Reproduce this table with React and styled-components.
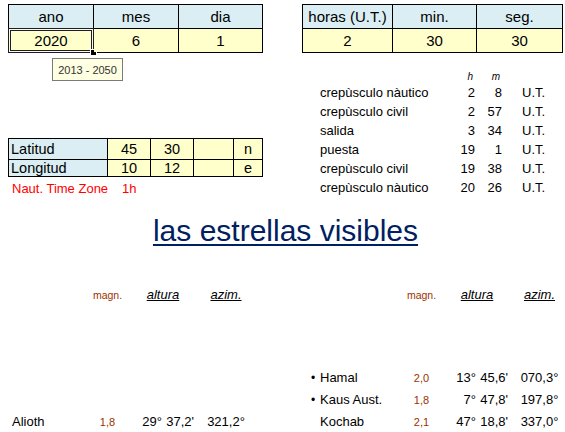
import React from 'react'
import styled, { createGlobalStyle } from 'styled-components'

const GlobalStyle = createGlobalStyle`
  html, body { margin: 0; padding: 0; background: #fff; }
  body {
    font-family: "Liberation Sans", Arial, sans-serif;
    color: #000;
    overflow: hidden;
  }
`

const HEAD_BG = '#daeef3'
const DATA_BG = '#ffffcc'
const BROWN = '#993300'

const Page = styled.div`
  width: 565px;
  height: 432px;
  box-sizing: border-box;
  padding: 4px 2px 0 8px;
  display: flex;
  flex-direction: column;
`

const TopRow = styled.div`
  display: flex;
  justify-content: space-between;
`

const SheetWrap = styled.div`
  position: relative;
`

const Sheet = styled.table`
  border-collapse: collapse;
  table-layout: fixed;
  width: ${p => p.$width}px;
  font-size: ${p => p.$size || 15}px;
`

const Row = styled.tr`
  height: ${p => p.$h || 24}px;
`

const Cell = styled.td`
  border: 1px solid #000;
  padding: 0 ${p => p.$pad || 0}px;
  text-align: ${p => p.$align || 'center'};
  background: ${p => (p.$head ? HEAD_BG : DATA_BG)};
  line-height: 1;
  position: relative;
`

const Selection = styled.div`
  position: absolute;
  inset: -1px;
  border: 3px double #1b1b38;
  pointer-events: none;
`

const Handle = styled.div`
  position: absolute;
  right: -4px;
  bottom: -4px;
  width: 5px;
  height: 5px;
  background: #000;
  border: 1px solid #fff;
`

const Tooltip = styled.div`
  position: absolute;
  left: 44px;
  top: 54px;
  width: 71px;
  height: 23px;
  box-sizing: border-box;
  border: 1px solid #7a7a7a;
  background: #ffffe1;
  font-size: 11px;
  color: #333;
  display: flex;
  align-items: center;
  justify-content: center;
`

const Middle = styled.div`
  display: grid;
  grid-template-columns: 312px 1fr;
  height: 144px;
`

const LatBlock = styled.div`
  margin-top: 85px;
`

const NautLine = styled.div`
  display: flex;
  color: #ff0000;
  font-size: 13px;
  height: 14px;
  line-height: 14px;
  margin-top: 5px;
  padding-left: 4px;
`

const NautLabel = styled.span`
  width: 110px;
`

const Twilight = styled.div`
  margin-top: 17px;
  font-size: 13px;
`

const TwiRow = styled.div`
  display: grid;
  grid-template-columns: 135px 20px 27px 1fr;
  height: ${p => (p.$head ? 13 : 19)}px;
  line-height: ${p => (p.$head ? 13 : 19)}px;
  font-size: ${p => (p.$head ? 10 : 13)}px;
  font-style: ${p => (p.$head ? 'italic' : 'normal')};
`

const Num = styled.span`
  text-align: right;
  padding-right: ${p => p.$pr || 0}px;
`

const Unit = styled.span`
  padding-left: 20px;
`

const Title = styled.h1`
  margin: 16px 0 0;
  height: 36px;
  line-height: 36px;
  text-align: center;
  font-weight: normal;
  font-size: 30px;
  color: #002060;
  text-decoration: underline;
  text-decoration-thickness: 2px;
  text-underline-offset: 3px;
`

const StarRow = styled.div`
  display: grid;
  grid-template-columns: 77px 45px 66px 60px 52px 12px 79px 45px 66px 53px;
  height: 22px;
  line-height: 22px;
  font-size: 13px;
  margin-top: ${p => p.$gap || 0}px;
`

const Name = styled.span`
  padding-left: ${p => p.$pl || 0}px;
  white-space: nowrap;
`

const Magn = styled.span`
  text-align: center;
  color: ${BROWN};
  font-size: ${p => (p.$head ? 10.5 : 11)}px;
`

const ColHead = styled.span`
  text-align: center;
  font-style: italic;
  text-decoration: underline;
  padding-left: ${p => p.$pl || 0}px;
`

const Altura = styled.span`
  display: grid;
  grid-template-columns: 32px 32px;
  white-space: nowrap;
  & > span { text-align: right; }
`

const Azim = styled.span`
  text-align: center;
  padding-left: ${p => p.$pl || 0}px;
`

const Bullet = styled.span`
  padding-left: 3px;
  font-size: 12px;
`

const twilight = [
  ['crepùsculo nàutico', 2, 8],
  ['crepùsculo civil', 2, 57],
  ['salida', 3, 34],
  ['puesta', 19, 1],
  ['crepùsculo civil', 19, 38],
  ['crepùsculo nàutico', 20, 26],
]

const right = [
  { bullet: true, name: 'Hamal', magn: '2,0', deg: '13°', min: "45,6'", az: '070,3°' },
  { bullet: true, name: 'Kaus Aust.', magn: '1,8', deg: '7°', min: "47,8'", az: '197,8°' },
  { bullet: false, name: 'Kochab', magn: '2,1', deg: '47°', min: "18,8'", az: '337,0°' },
]

const left = [null, null, { name: 'Alioth', magn: '1,8', deg: '29°', min: "37,2'", az: '321,2°' }]

function StarCells({ star, side }) {
  if (!star) {
    return side === 'left' ? (
      <>
        <span /><span /><span /><span />
      </>
    ) : (
      <>
        <span /><span /><span /><span /><span />
      </>
    )
  }
  return (
    <>
      {side === 'right' && <Bullet>{star.bullet ? '•' : ''}</Bullet>}
      <Name $pl={side === 'left' ? 4 : 0}>{star.name}</Name>
      <Magn>{star.magn}</Magn>
      <Altura>
        <span>{star.deg}</span>
        <span>{star.min}</span>
      </Altura>
      <Azim $pl={side === 'right' ? 6 : 0}>{star.az}</Azim>
    </>
  )
}

export default function App() {
  return (
    <Page>
      <GlobalStyle />
      <TopRow>
        <SheetWrap>
          <Sheet $width={254}>
            <colgroup>
              <col style={{ width: 85 }} />
              <col style={{ width: 85 }} />
              <col style={{ width: 84 }} />
            </colgroup>
            <tbody>
              <Row>
                <Cell $head>ano</Cell>
                <Cell $head>mes</Cell>
                <Cell $head>dia</Cell>
              </Row>
              <Row>
                <Cell>
                  2020
                  <Selection />
                  <Handle />
                </Cell>
                <Cell>6</Cell>
                <Cell>1</Cell>
              </Row>
            </tbody>
          </Sheet>
          <Tooltip>2013 - 2050</Tooltip>
        </SheetWrap>
        <Sheet $width={260}>
          <colgroup>
            <col style={{ width: 90 }} />
            <col style={{ width: 84 }} />
            <col style={{ width: 86 }} />
          </colgroup>
          <tbody>
            <Row>
              <Cell $head>horas (U.T.)</Cell>
              <Cell $head>min.</Cell>
              <Cell $head>seg.</Cell>
            </Row>
            <Row>
              <Cell>2</Cell>
              <Cell>30</Cell>
              <Cell>30</Cell>
            </Row>
          </tbody>
        </Sheet>
      </TopRow>

      <Middle>
        <LatBlock>
          <Sheet $width={254} $size={14.5}>
            <colgroup>
              <col style={{ width: 99 }} />
              <col style={{ width: 43 }} />
              <col style={{ width: 43 }} />
              <col style={{ width: 40 }} />
              <col style={{ width: 29 }} />
            </colgroup>
            <tbody>
              <Row $h={21}>
                <Cell $head $align="left" $pad={2}>Latitud</Cell>
                <Cell>45</Cell>
                <Cell>30</Cell>
                <Cell />
                <Cell>n</Cell>
              </Row>
              <Row $h={17}>
                <Cell $head $align="left" $pad={2}>Longitud</Cell>
                <Cell>10</Cell>
                <Cell>12</Cell>
                <Cell />
                <Cell>e</Cell>
              </Row>
            </tbody>
          </Sheet>
          <NautLine>
            <NautLabel>Naut. Time Zone</NautLabel>
            <span>1h</span>
          </NautLine>
        </LatBlock>

        <Twilight>
          <TwiRow $head>
            <span />
            <Num $pr={2}>h</Num>
            <Num $pr={2}>m</Num>
            <span />
          </TwiRow>
          {twilight.map(([label, h, m], i) => (
            <TwiRow key={i}>
              <span>{label}</span>
              <Num>{h}</Num>
              <Num>{m}</Num>
              <Unit>U.T.</Unit>
            </TwiRow>
          ))}
        </Twilight>
      </Middle>

      <Title>las estrellas visibles</Title>

      <StarRow $gap={35}>
        <span />
        <Magn $head>magn.</Magn>
        <ColHead>altura</ColHead>
        <ColHead>azim.</ColHead>
        <span />
        <span />
        <span />
        <Magn $head>magn.</Magn>
        <ColHead>altura</ColHead>
        <ColHead $pl={6}>azim.</ColHead>
      </StarRow>

      {right.map((star, i) => (
        <StarRow key={star.name} $gap={i === 0 ? 61 : 0}>
          <StarCells star={left[i]} side="left" />
          <span />
          <StarCells star={star} side="right" />
        </StarRow>
      ))}
    </Page>
  )
}
